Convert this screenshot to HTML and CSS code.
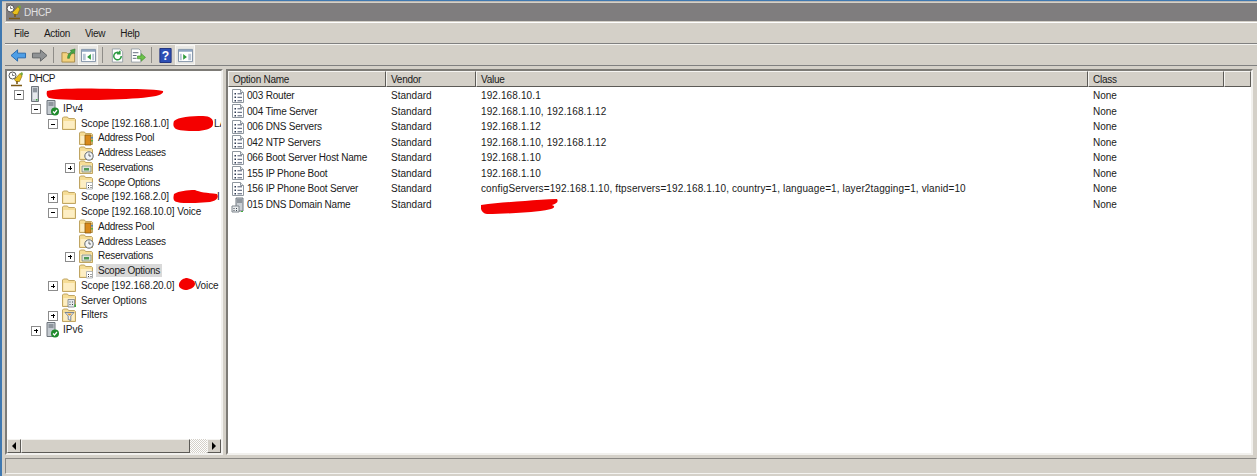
FILE: index.html
```html
<!DOCTYPE html>
<html lang="en">
<head>
<meta charset="utf-8">
<title>DHCP</title>
<link rel="stylesheet" href="styles.css">
</head>
<body>
<svg class="defs" width="0" height="0" aria-hidden="true">
  <defs>
    <symbol id="folder" viewBox="0 0 16 16"><path d="M1.500 14.500V3l1-1h4l1 1.500h6l1 1v10z" fill="#f6dd96" stroke="#c0a563"/><path d="M2.500 13.500V6h11v7.500z" fill="#fdeec4"/></symbol>
    <symbol id="server" viewBox="0 0 16 16"><path d="M4.500 .5h7v15h-7z" fill="#c4cad0" stroke="#6e757c"/><path d="M6 3h4M6 5h4" stroke="#59616a"/><path d="M6 7h4v6H6z" fill="#e6e9ec"/><path d="M9 13h1.500v1.500H9z" fill="#3fae3a"/></symbol>
    <symbol id="serverok" viewBox="0 0 16 16"><path d="M3 .5h8v14H3z" fill="#c4cad0" stroke="#6e757c"/><path d="M4.500 3h5M4.500 5h5" stroke="#59616a"/><circle cx="11" cy="11.500" r="4" fill="#1f8a2c"/><path d="M9 11.500l1.500 1.500 2.500-3" stroke="#fff" stroke-width="1.200" fill="none"/></symbol>
    <symbol id="dhcp" viewBox="0 0 16 16"><path d="M6.500 8.500L12 2.500l2 2.500-2.500 5.500H8z" fill="#e8c01c" stroke="#8c6d10" stroke-width=".7"/><path d="M12 2.500l2-1.500 1 2-1 2z" fill="#74a83a"/><path d="M9 10v3M3 14.500h11" stroke="#7c5a16" stroke-width="1.600"/><circle cx="4.500" cy="4.500" r="3.500" fill="#fff" stroke="#555"/><path d="M4.500 2.500v2h2" stroke="#555" fill="none" stroke-width=".8"/></symbol>
    <symbol id="pool" viewBox="0 0 16 16"><use href="#folder"/><path d="M7 5h6v10H7z" fill="#d98a1c" stroke="#8c5a10" stroke-width=".8"/><path d="M14 7v1.500" stroke="#2d7fd0" stroke-width="1.500"/><path d="M14 10v1.500" stroke="#3fae3a" stroke-width="1.500"/></symbol>
    <symbol id="lease" viewBox="0 0 16 16"><use href="#folder"/><circle cx="11" cy="11" r="4.200" fill="#f2f4f6" stroke="#5e666e"/><path d="M11 8.500V11h2" stroke="#444" fill="none" stroke-width=".8"/></symbol>
    <symbol id="reserve" viewBox="0 0 16 16"><use href="#folder"/><path d="M4 7h9v6H4z" fill="#dfe4dd" stroke="#7b8579" stroke-width=".8"/><path d="M6 9h5v2.500H6z" fill="#4f9a55"/></symbol>
    <symbol id="scopeopt" viewBox="0 0 16 16"><use href="#folder"/><path d="M8.500 8.500h6v6.500h-6z" fill="#fff" stroke="#a0a6ac" stroke-width=".8"/><path d="M10 11h1v1h-1zM10 13h1v1h-1zM12.500 11h1v1h-1zM12.500 13h1v1h-1z" fill="#444"/></symbol>
    <symbol id="serveropt" viewBox="0 0 16 16"><use href="#folder"/><path d="M7 7.500h6.500V15H7z" fill="#e6e9ec" stroke="#777f87" stroke-width=".8"/><path d="M8.500 9.500h1v1h-1zM11 9.500h1v1h-1zM8.500 12h1v1h-1zM11 12h1v1h-1z" fill="#3a434c"/><path d="M13.500 12.500h1.500V15h-1.500z" fill="#3fae3a"/></symbol>
    <symbol id="filter" viewBox="0 0 16 16"><use href="#folder"/><path d="M4 5.500h9L9.800 9v4.500l-2.600-1V9z" fill="#eef1f4" stroke="#5b6f8c" stroke-width=".8"/><path d="M6 6.500h5L9 8.500H8z" fill="#e29a26"/></symbol>
    <symbol id="opt" viewBox="0 0 16 16"><path d="M2.500 1.500h8l3 3v10h-11z" fill="#fff" stroke="#8f979f"/><path d="M10.500 1.500v3h3" fill="#e4e7ea" stroke="#8f979f"/><path d="M4.500 5h1.500v1.500H4.500zM4.500 8.500h1.500V10H4.500zM4.500 12h1.500v1.500H4.500z" fill="#2f3a52"/><path d="M7.500 5.800h4.500M7.500 9.300h4.500M7.500 12.800h4.500" stroke="#4b556d"/></symbol>
    <symbol id="optsrv" viewBox="0 0 16 16"><path d="M6 1h7v13H6z" fill="#c9ced3" stroke="#717980"/><path d="M7 3h5M7 5h5" stroke="#59616a"/><path d="M2 9h7v6H2z" fill="#e8ebed" stroke="#7e868d"/><path d="M3.500 11h1v1h-1zM6 11h1v1H6zM3.500 13h1v1h-1zM6 13h1v1H6z" fill="#3a434c"/><path d="M11 14h2v1h-2z" fill="#3fae3a"/></symbol>
  </defs>
</svg>

<div class="window">
  <header class="titlebar">
    <svg class="icon"><use href="#dhcp"/></svg>
    <span>DHCP</span>
  </header>

  <nav class="menubar">
    <span>File</span><span>Action</span><span>View</span><span>Help</span>
  </nav>

  <div class="toolbar">
    <button class="tool">
      <svg viewBox="0 0 18 16"><path d="M1 8l7-6v3.500h8.500v5H8V14z" fill="#4d9ee6" stroke="#2467ae"/></svg>
    </button>
    <button class="tool fwd">
      <svg viewBox="0 0 18 16"><path d="M17 8l-7-6v3.500H1.500v5H10V14z" fill="#8f9294" stroke="#5f6264"/></svg>
    </button>
    <i class="sep"></i>
    <button class="tool">
      <svg viewBox="0 0 18 16"><path d="M2 5h5l1 1h7.500v9H2z" fill="#f3d27e" stroke="#a88a46"/><path d="M8 11c0-4 2-6 4-7l-1-1.500L16 1l-.5 5-1.500-1c-2 1-3.500 2.500-4 6z" fill="#49a646" stroke="#2c7a2c" stroke-width=".6"/></svg>
    </button>
    <button class="tool active">
      <svg viewBox="0 0 18 16"><path d="M1.500 1.500h15v13h-15z" fill="#fff" stroke="#7c8ea3"/><path d="M2 2h14v2H2z" fill="#8fa6c2"/><path d="M3 6h3v7H3zM13 6h2v7h-2z" fill="#b9c6d6"/><path d="M11.500 6.500v6L7.500 9.500z" fill="#2f9b3c"/></svg>
    </button>
    <i class="sep"></i>
    <button class="tool">
      <svg viewBox="0 0 18 16"><path d="M3.500 1h8l3 3v11h-11z" fill="#fff" stroke="#98a0a8"/><path d="M13 8.500a4 4 0 1 1-1.500-3M11.500 3v3h-3" fill="none" stroke="#2b9a3f" stroke-width="1.600"/></svg>
    </button>
    <button class="tool">
      <svg viewBox="0 0 18 16"><path d="M2.500 1h8l2 2v12h-10z" fill="#fff" stroke="#98a0a8"/><path d="M4 5h6M4 8h4M4 11h4" stroke="#5e687a"/><path d="M9 8.500h4V6l4.500 4-4.500 4v-2.500H9z" fill="#6cc24a" stroke="#3e8f2d" stroke-width=".7"/></svg>
    </button>
    <i class="sep tight"></i>
    <button class="tool">
      <svg viewBox="0 0 18 16"><path d="M3 .5h12v15H3z" fill="#2d4fb5" stroke="#1c2f7c"/><text class="help-mark" x="9" y="13" text-anchor="middle">?</text></svg>
    </button>
    <button class="tool active">
      <svg viewBox="0 0 18 16"><path d="M1.500 1.500h15v13h-15z" fill="#fff" stroke="#7c8ea3"/><path d="M2 2h14v2H2z" fill="#8fa6c2"/><path d="M3 6h2v7H3zM12 6h3v7h-3z" fill="#b9c6d6"/><path d="M6.500 6.500v6l4-3z" fill="#2f9b3c"/></svg>
    </button>
  </div>

  <main class="panes">
    <section class="tree-pane">
      <ul class="tree">
        <li class="row l0"><svg class="icon"><use href="#dhcp"/></svg><span class="label root-label">DHCP</span></li>
        <li class="row l1"><b class="exp minus"></b><svg class="icon"><use href="#server"/></svg><span class="label"></span></li>
        <li class="row l2"><b class="exp minus"></b><svg class="icon"><use href="#serverok"/></svg><span class="label">IPv4</span></li>
        <li class="row l3"><b class="exp minus"></b><svg class="icon"><use href="#folder"/></svg><span class="label">Scope [192.168.1.0]</span><span class="label tail tail-la">LA</span></li>
        <li class="row l4"><b class="exp none"></b><svg class="icon"><use href="#pool"/></svg><span class="label">Address Pool</span></li>
        <li class="row l4"><b class="exp none"></b><svg class="icon"><use href="#lease"/></svg><span class="label">Address Leases</span></li>
        <li class="row l4"><b class="exp plus"></b><svg class="icon"><use href="#reserve"/></svg><span class="label">Reservations</span></li>
        <li class="row l4"><b class="exp none"></b><svg class="icon"><use href="#scopeopt"/></svg><span class="label">Scope Options</span></li>
        <li class="row l3"><b class="exp plus"></b><svg class="icon"><use href="#folder"/></svg><span class="label">Scope [192.168.2.0]</span><span class="label tail tail-i">I</span></li>
        <li class="row l3"><b class="exp minus"></b><svg class="icon"><use href="#folder"/></svg><span class="label">Scope [192.168.10.0] Voice</span></li>
        <li class="row l4"><b class="exp none"></b><svg class="icon"><use href="#pool"/></svg><span class="label">Address Pool</span></li>
        <li class="row l4"><b class="exp none"></b><svg class="icon"><use href="#lease"/></svg><span class="label">Address Leases</span></li>
        <li class="row l4"><b class="exp plus"></b><svg class="icon"><use href="#reserve"/></svg><span class="label">Reservations</span></li>
        <li class="row l4"><b class="exp none"></b><svg class="icon"><use href="#scopeopt"/></svg><span class="label selected">Scope Options</span></li>
        <li class="row l3"><b class="exp plus"></b><svg class="icon"><use href="#folder"/></svg><span class="label">Scope [192.168.20.0]</span><span class="label tail tail-voice">Voice</span></li>
        <li class="row l3"><b class="exp none"></b><svg class="icon"><use href="#serveropt"/></svg><span class="label">Server Options</span></li>
        <li class="row l3"><b class="exp plus"></b><svg class="icon"><use href="#filter"/></svg><span class="label">Filters</span></li>
        <li class="row l2"><b class="exp plus"></b><svg class="icon"><use href="#serverok"/></svg><span class="label">IPv6</span></li>
      </ul>
      <div class="hscroll">
        <span class="sb-btn"><i class="arrow-left"></i></span>
        <span class="sb-thumb"></span>
        <span class="sb-track"></span>
        <span class="sb-btn"><i class="arrow-right"></i></span>
      </div>
      <svg class="scribble s-name" viewBox="0 0 118 12" preserveAspectRatio="none"><path d="M1 3C10 0 40 0 70 1c20 0 36 0 47 2 1 2-3 5-14 6-14 2-30 2-50 3-20 0-40 0-50-2C1 9 0 6 1 3z" fill="#f40000"/></svg>
      <svg class="scribble s-s1" viewBox="0 0 41 15" preserveAspectRatio="none"><path d="M1 5C5 1 18 0 30 0c7 0 11 3 10 8 0 4-6 6-14 7-9 0-18 0-23-2C0 11 0 8 1 5z" fill="#f40000"/></svg>
      <svg class="scribble s-s2" viewBox="0 0 45 13" preserveAspectRatio="none"><path d="M1 4C6 1 14 0 22 0c4 2 12 3 22 4 2 3 0 7-7 8-12 1-26 2-33 0C0 11 0 8 1 4z" fill="#f40000"/></svg>
      <svg class="scribble s-s3" viewBox="0 0 17 12" preserveAspectRatio="none"><path d="M1 6c1-4 5-6 8-6 5 1 8 3 8 6s-4 5-8 6C5 12 0 10 1 6z" fill="#f40000"/></svg>
    </section>

    <section class="list-pane">
      <div class="grid-row head">
        <span>Option Name</span><span>Vendor</span><span>Value</span><span>Class</span><span></span>
      </div>
      <div class="grid-row"><span class="name"><svg class="icon"><use href="#opt"/></svg>003 Router</span><span>Standard</span><span class="value">192.168.10.1</span><span>None</span></div>
      <div class="grid-row"><span class="name"><svg class="icon"><use href="#opt"/></svg>004 Time Server</span><span>Standard</span><span class="value">192.168.1.10, 192.168.1.12</span><span>None</span></div>
      <div class="grid-row"><span class="name"><svg class="icon"><use href="#opt"/></svg>006 DNS Servers</span><span>Standard</span><span class="value">192.168.1.12</span><span>None</span></div>
      <div class="grid-row"><span class="name"><svg class="icon"><use href="#opt"/></svg>042 NTP Servers</span><span>Standard</span><span class="value">192.168.1.10, 192.168.1.12</span><span>None</span></div>
      <div class="grid-row"><span class="name"><svg class="icon"><use href="#opt"/></svg>066 Boot Server Host Name</span><span>Standard</span><span class="value">192.168.1.10</span><span>None</span></div>
      <div class="grid-row"><span class="name"><svg class="icon"><use href="#opt"/></svg>155 IP Phone Boot</span><span>Standard</span><span class="value">192.168.1.10</span><span>None</span></div>
      <div class="grid-row"><span class="name"><svg class="icon"><use href="#opt"/></svg>156 IP Phone Boot Server</span><span>Standard</span><span class="value">configServers=192.168.1.10, ftpservers=192.168.1.10, country=1, language=1, layer2tagging=1, vlanid=10</span><span>None</span></div>
      <div class="grid-row"><span class="name"><svg class="icon"><use href="#optsrv"/></svg>015 DNS Domain Name</span><span>Standard</span><span class="value"></span><span>None</span></div>
      <svg class="scribble s-domain" viewBox="0 0 77 15" preserveAspectRatio="none"><path d="M0 6C14 4 30 3 44 2c10-1 22-2 32-2 2 3-1 5-5 6 3 1 3 3-1 4-8 2-14 2-20 3-14 1-30 2-44 2C1 14-1 10 0 6z" fill="#f40000"/></svg>
    </section>
  </main>

  <footer class="statusbar"></footer>
</div>
</body>
</html>
```

FILE: styles.css
```css
* { box-sizing: border-box; }
html, body { height: 100%; }
body {
  margin: 0;
  background: #3f78b0;
  font-family: "Liberation Sans", Arial, sans-serif;
  font-size: 10px;
  color: #1a1a1a;
  overflow: hidden;
}
.defs { position: absolute; }
.window {
  height: 476px;
  margin: 1px 0 0 2px;
  padding: 0 0 0 3px;
  background: #d4d0c8;
  display: flex;
  flex-direction: column;
  border-top: 1px solid #b8b6b2;
}
.icon { width: 16px; height: 16px; flex: none; }

.titlebar {
  height: 18px;
  margin: 1px 0 0 1px;
  background: #7f7d7e;
  color: #e2e2e2;
  display: flex;
  align-items: center;
  gap: 2px;
  font-size: 10px;
  letter-spacing: -.2px;
}

.menubar {
  height: 22px;
  margin-top: 1px;
  border-top: 1px solid #fff;
  border-bottom: 1px solid #808080;
  display: flex;
  align-items: center;
  gap: 15px;
  padding-left: 9px;
  letter-spacing: -.3px;
}

.toolbar {
  height: 22px;
  border-top: 1px solid #f4f3f0;
  border-bottom: 1px solid #808080;
  display: flex;
  align-items: center;
  padding-left: 3px;
}
.tool {
  width: 20px;
  height: 20px;
  margin: 0;
  padding: 1px;
  border: 1px solid transparent;
  background: none;
  display: flex;
  align-items: center;
  justify-content: center;
}
.tool.fwd { margin-left: 1px; }
.tool svg { width: 17px; height: 15px; flex: none; }
.tool.active { background: #e9e8e4; border-color: #f6f5f2; }
.sep { width: 1px; height: 16px; margin: 0 4px; background: #8f8d88; }
.sep.tight { margin-right: 3px; }
.help-mark { font: 700 13px "Liberation Sans", sans-serif; fill: #fff; }

.panes {
  height: 386px;
  margin-top: 3px;
  display: flex;
  gap: 3px;
  padding-right: 4px;
}
.tree-pane, .list-pane {
  position: relative;
  background: #fff;
  border: 2px solid;
  border-color: #7d7b76 #f2f1ee #f2f1ee #7d7b76;
}
.tree-pane {
  width: 218px;
  flex: none;
  display: flex;
  flex-direction: column;
}
.list-pane { flex: 1; min-width: 0; }

.tree {
  flex: 1;
  list-style: none;
  margin: 0;
  padding: .4px 0 0;
  overflow: hidden;
}
.row {
  height: 14.760px;
  display: flex;
  align-items: center;
  white-space: nowrap;
}
.l0 { padding-left: 1px; }
.l1 { padding-left: 7px; }
.l2 { padding-left: 24px; }
.l3 { padding-left: 41px; }
.l4 { padding-left: 58px; }
.exp {
  width: 13px;
  height: 8px;
  flex: none;
  position: relative;
}
.exp.minus::before, .exp.plus::before {
  content: "";
  position: absolute;
  left: 0;
  top: 0;
  width: 8px;
  height: 8px;
  border: 1px solid #8c8c8c;
  background: linear-gradient(#000, #000) center / 4px 1px no-repeat, #fff;
}
.exp.plus::before {
  background: linear-gradient(#000, #000) center / 4px 1px no-repeat,
              linear-gradient(#000, #000) center / 1px 4px no-repeat, #fff;
}
.label { padding: 1px 2px; margin-left: 1px; line-height: 11px; }
.l3 .label { margin-left: 2px; letter-spacing: -.08px; }
.l4 .label { margin-left: 2px; letter-spacing: -.28px; }
.root-label { margin-left: 3px; letter-spacing: -.6px; }
.selected { background: #d9d9d9; }
.l3 .tail { padding-left: 0; }
.l3 .tail-la { margin-left: 43px; }
.l3 .tail-i { margin-left: 46px; }
.l3 .tail-voice { margin-left: 18px; }

.hscroll {
  height: 14px;
  flex: none;
  display: flex;
  background: #d4d0c8;
}
.sb-btn {
  width: 14px;
  display: flex;
  align-items: center;
  justify-content: center;
  background: #d4d0c8;
  border: 1px solid;
  border-color: #f4f3f0 #5c5a56 #5c5a56 #f4f3f0;
}
.sb-thumb {
  width: 169px;
  border: 1px solid;
  border-color: #f4f3f0 #5c5a56 #5c5a56 #f4f3f0;
}
.sb-track {
  flex: 1;
  background: repeating-conic-gradient(#d4d0c8 0 25%, #fff 0 50%) 0 0 / 2px 2px;
}
.arrow-left, .arrow-right { width: 0; height: 0; border: 4px solid transparent; }
.arrow-left { border-right-color: #000; border-left-width: 0; }
.arrow-right { border-left-color: #000; border-right-width: 0; }

.grid-row {
  display: grid;
  grid-template-columns: 158px 90px 612px 136px 1fr;
  align-items: center;
  height: 15.570px;
  white-space: nowrap;
}
.grid-row > span { padding-left: 5px; overflow: hidden; }
.grid-row > .name {
  display: flex;
  align-items: center;
  gap: 1px;
  padding-left: 2px;
  letter-spacing: -.2px;
}
.value { letter-spacing: .12px; }
.head { height: 16px; margin-bottom: .8px; align-items: stretch; letter-spacing: -.25px; }
.head > span {
  background: #d4d0c8;
  padding-left: 4px;
  padding-top: 1px;
  line-height: 13px;
  border: 1px solid;
  border-color: #f6f5f2 #5c5a56 #5c5a56 #f6f5f2;
}

.scribble { position: absolute; }
.s-name { left: 39px; top: 17px; width: 118px; height: 12px; }
.s-s1 { left: 166px; top: 45px; width: 41px; height: 15px; }
.s-s2 { left: 166px; top: 119px; width: 45px; height: 13px; }
.s-s3 { left: 171px; top: 207px; width: 17px; height: 12px; }
.s-domain { left: 253px; top: 128px; width: 77px; height: 15px; }

.statusbar {
  height: 16px;
  margin-top: 3px;
  border: 1px solid;
  border-color: #8a8884 #f4f3f0 #f4f3f0 #8a8884;
}
```
